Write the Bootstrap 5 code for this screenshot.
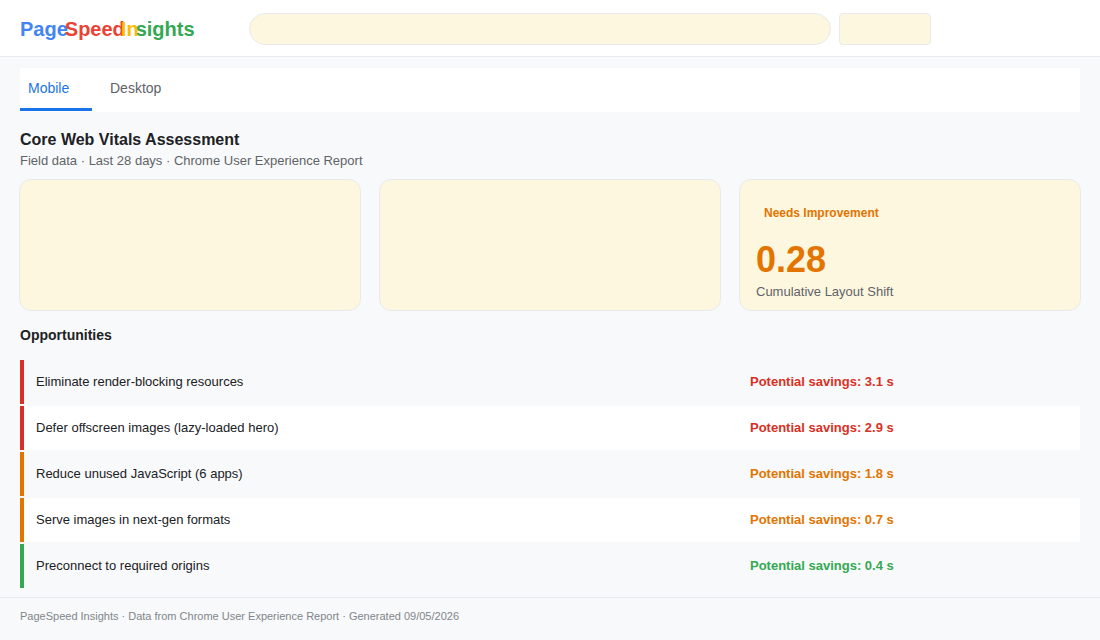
<!DOCTYPE html>
<html lang="en">
<head>
  <meta charset="UTF-8">
  <meta name="viewport" content="width=device-width, initial-scale=1.0">
  <title>PageSpeed Insights</title>
  <link href="https://cdn.jsdelivr.net/npm/bootstrap@5.3.5/dist/css/bootstrap.min.css" rel="stylesheet">
  <style>
    body { font-family: "Liberation Sans", Arial, sans-serif; background: #f8f9fa; color: #202124; height: 640px; overflow: hidden; }
    .psi-header { height: 57px; background: #fff; border-bottom: 1px solid #e8eaed; padding: 2px 20px 0; }
    .psi-logo { width: 229px; font-size: 20px; font-weight: 700; line-height: 1; }
    .psi-logo span { display: inline-block; }
    .psi-logo .l-blue { color: #4285f4; }
    .psi-logo .l-red { color: #ea4335; margin-left: -3px; }
    .psi-logo .l-yellow { color: #fbbc04; margin-left: -4px; }
    .psi-logo .l-green { color: #34a853; margin-left: -3px; }
    .ph-block { background: #fef7e0; border: 1px solid #e8eaed; }
    .ph-search { width: 582px; height: 32px; border-radius: 16px; }
    .ph-btn { width: 92px; height: 32px; border-radius: 4px; }
    .psi-main { padding: 11px 20px 0; }
    .psi-tabs { background: #fff; height: 44px; }
    .psi-tab { display: block; width: 72px; height: 43px; padding: 10px 8px 0; font-size: 14px; color: #5f6368; text-decoration: none; }
    .psi-tab + .psi-tab { width: auto; padding-left: 18px; }
    .psi-tab.on { color: #1a73e8; border-bottom: 3px solid #1a73e8; }
    .psi-title { font-size: 16px; font-weight: 700; line-height: 20px; margin: 18px 0 0; }
    .psi-sub { font-size: 13px; line-height: 18px; color: #5f6368; margin: 2px 0 9px; }
    .psi-metrics { gap: 18px; margin: 0 -1px; }
    .ph-card { flex: 1 1 0; height: 132px; border-radius: 12px; padding: 24px 16px 0; }
    .psi-verdict { font-size: 12px; font-weight: 700; line-height: 18px; color: #e37400; padding-left: 8px; }
    .psi-value { font-size: 36px; font-weight: 700; line-height: 40px; color: #e37400; margin-top: 18px; }
    .psi-metric-name { font-size: 13px; line-height: 18px; color: #5f6368; margin-top: 3px; }
    .psi-h2 { font-size: 14px; font-weight: 700; line-height: 18px; margin: 15px 0 16px; }
    .psi-row { height: 44px; margin-bottom: 2px; padding-left: 12px; border-left: 4px solid; font-size: 13px; }
    .psi-row:nth-child(even) { background: #fff; }
    .psi-saving { width: 330px; font-weight: 700; font-size: 13px; }
    .b-red { border-left-color: #d93025; }
    .b-orange { border-left-color: #e37400; }
    .b-green { border-left-color: #34a853; }
    .t-red { color: #d93025; }
    .t-orange { color: #e37400; }
    .t-green { color: #34a853; }
    .psi-footer { margin-top: 9px; border-top: 1px solid #e8eaed; padding: 11px 20px; font-size: 11px; line-height: 14px; color: #80868b; }
  </style>
</head>
<body>
  <header class="psi-header d-flex align-items-center">
    <div class="psi-logo"><span class="l-blue">Page</span><span class="l-red">Speed</span><span class="l-yellow">In</span><span class="l-green">sights</span></div>
    <div class="ph-block ph-search"></div>
    <div class="ph-block ph-btn ms-2"></div>
  </header>

  <main class="psi-main">
    <nav class="psi-tabs d-flex">
      <a class="psi-tab on" href="#">Mobile</a>
      <a class="psi-tab" href="#">Desktop</a>
    </nav>

    <h1 class="psi-title">Core Web Vitals Assessment</h1>
    <p class="psi-sub">Field data · Last 28 days · Chrome User Experience Report</p>

    <div class="psi-metrics d-flex">
      <div class="ph-block ph-card"></div>
      <div class="ph-block ph-card"></div>
      <div class="ph-block ph-card">
        <div class="psi-verdict">Needs Improvement</div>
        <div class="psi-value">0.28</div>
        <div class="psi-metric-name">Cumulative Layout Shift</div>
      </div>
    </div>

    <h2 class="psi-h2">Opportunities</h2>

    <div>
      <div class="psi-row b-red d-flex align-items-center"><div class="flex-grow-1">Eliminate render-blocking resources</div><div class="psi-saving t-red">Potential savings: 3.1 s</div></div>
      <div class="psi-row b-red d-flex align-items-center"><div class="flex-grow-1">Defer offscreen images (lazy-loaded hero)</div><div class="psi-saving t-red">Potential savings: 2.9 s</div></div>
      <div class="psi-row b-orange d-flex align-items-center"><div class="flex-grow-1">Reduce unused JavaScript (6 apps)</div><div class="psi-saving t-orange">Potential savings: 1.8 s</div></div>
      <div class="psi-row b-orange d-flex align-items-center"><div class="flex-grow-1">Serve images in next-gen formats</div><div class="psi-saving t-orange">Potential savings: 0.7 s</div></div>
      <div class="psi-row b-green d-flex align-items-center"><div class="flex-grow-1">Preconnect to required origins</div><div class="psi-saving t-green">Potential savings: 0.4 s</div></div>
    </div>
  </main>

  <footer class="psi-footer">PageSpeed Insights · Data from Chrome User Experience Report · Generated 09/05/2026</footer>

  <script src="https://cdn.jsdelivr.net/npm/bootstrap@5.3.5/dist/js/bootstrap.bundle.min.js"></script>
</body>
</html>
